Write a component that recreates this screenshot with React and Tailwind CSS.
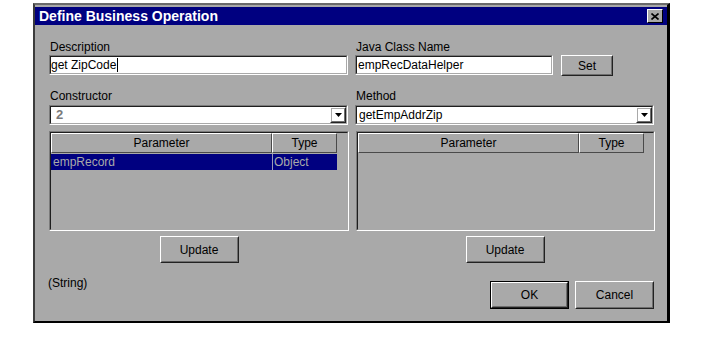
import React from "react";

function Sunken({ className, inner, children }) {
  return (
    <div className={"border border-t-[#7b7b7b] border-l-[#7b7b7b] border-r-white border-b-white " + className}>
      <div className={"h-full w-full border border-t-[#1e1e1e] border-l-[#1e1e1e] border-r-[#a9a9a9] border-b-[#a9a9a9] " + inner}>
        {children}
      </div>
    </div>
  );
}

function Raised({ className, children }) {
  return (
    <div className={"border border-t-white border-l-white border-r-[#222] border-b-[#222] " + className}>
      <div className="h-full w-full border border-t-[#a9a9a9] border-l-[#a9a9a9] border-r-[#6e6e6e] border-b-[#6e6e6e] flex items-center justify-center">
        {children}
      </div>
    </div>
  );
}

function Arrow() {
  return (
    <svg width="7" height="4" viewBox="0 0 7 4">
      <polygon points="0,0 7,0 3.5,4" fill="#000" />
    </svg>
  );
}

function Combo({ children }) {
  return (
    <Sunken className="h-[20px] w-[299px]" inner="bg-white flex items-center justify-between">
      <div className="pl-[2px] flex items-center">{children}</div>
      <Raised className="h-[16px] w-[16px]">
        <Arrow />
      </Raised>
    </Sunken>
  );
}

function HeaderCell({ className, children }) {
  return (
    <div className={"h-[20px] border border-t-white border-l-white border-r-[#4a4a4a] border-b-[#4a4a4a] flex items-center justify-center " + className}>
      {children}
    </div>
  );
}

export default function App() {
  return (
    <div className="w-[713px] h-[338px] bg-white pt-[3px] pl-[33px] font-['Liberation_Sans',Arial,sans-serif] text-[12px] leading-[14px] text-black">
      <div className="w-[637px] h-[320px] bg-[#a9a9a9] border-l-2 border-t-2 border-l-[#3c3c3c] border-t-[#6a6a6a] border-r-[3px] border-b-2 border-r-black border-b-black flex flex-col">
        <div className="mt-[2px] h-[18px] bg-[#000080] flex items-center justify-between pl-[4px] pr-[4px]">
          <span className="text-white font-bold text-[14px] leading-[16px]">Define Business Operation</span>
          <div className="w-[16px] h-[14px] bg-[#a9a9a9] border border-t-white border-l-white border-r-black border-b-black flex items-center justify-center">
            <svg width="8" height="7" viewBox="0 0 8 7">
              <path d="M0.5 0.5 L7.5 6.5 M7.5 0.5 L0.5 6.5" stroke="#000" strokeWidth="1.6" />
            </svg>
          </div>
        </div>

        <div className="pl-[14px] pt-[15px] flex flex-col">
          <div className="flex gap-[6px]">
            {/* Left column */}
            <div className="w-[300px] flex flex-col">
              <div className="h-[14px] pl-[1px]">Description</div>
              <Sunken className="mt-[1px] h-[20px] w-[299px]" inner="bg-white flex items-center">
                <span className="pl-[0px]">get ZipCode</span>
                <span className="ml-[1px] w-[1px] h-[14px] bg-black" />
              </Sunken>
              <div className="mt-[14px] h-[14px] pl-[1px]">Constructor</div>
              <div className="mt-[2px]">
                <Combo>
                  <span className="pl-[3px] font-bold text-[13px] text-[#7a7a7a]">2</span>
                </Combo>
              </div>
              <Sunken className="mt-[6px] h-[100px] w-[300px]" inner="bg-[#a9a9a9]">
                <div className="flex">
                  <HeaderCell className="w-[221px]">Parameter</HeaderCell>
                  <HeaderCell className="w-[65px]">Type</HeaderCell>
                </div>
                <div className="mt-[1px] h-[16px] w-[286px] bg-[#000080] flex text-[#a9a9a9]">
                  <div className="w-[221px] pl-[2px] flex items-center">empRecord</div>
                  <div className="w-[65px] border-l border-l-[#9a9ab8] pl-[1px] flex items-center">Object</div>
                </div>
              </Sunken>
              <Raised className="mt-[5px] h-[27px] w-[79px] self-center">Update</Raised>
            </div>

            {/* Right column */}
            <div className="w-[300px] flex flex-col">
              <div className="h-[14px] pl-[1px]">Java Class Name</div>
              <div className="mt-[1px] flex">
                <Sunken className="h-[20px] w-[198px]" inner="bg-white flex items-center">
                  <span className="pl-[1px]">empRecDataHelper</span>
                </Sunken>
                <Raised className="ml-[8px] h-[21px] w-[52px]">Set</Raised>
              </div>
              <div className="mt-[13px] h-[14px] pl-[1px]">Method</div>
              <div className="mt-[2px]">
                <Combo>
                  <span>getEmpAddrZip</span>
                </Combo>
              </div>
              <Sunken className="mt-[6px] ml-[1px] h-[100px] w-[299px]" inner="bg-[#a9a9a9]">
                <div className="flex">
                  <HeaderCell className="w-[221px]">Parameter</HeaderCell>
                  <HeaderCell className="w-[65px]">Type</HeaderCell>
                </div>
              </Sunken>
              <Raised className="mt-[5px] h-[27px] w-[79px] self-center">Update</Raised>
            </div>
          </div>

          <div className="mt-[13px] w-[606px] flex items-start">
            <div className="-ml-[1px] h-[14px]">(String)</div>
            <div className="flex-1" />
            <div className="mt-[5px] h-[28px] w-[79px] border border-black">
              <Raised className="h-full w-full">OK</Raised>
            </div>
            <Raised className="mt-[5px] ml-[6px] mr-[1px] h-[28px] w-[79px]">Cancel</Raised>
          </div>
        </div>
      </div>
    </div>
  );
}
